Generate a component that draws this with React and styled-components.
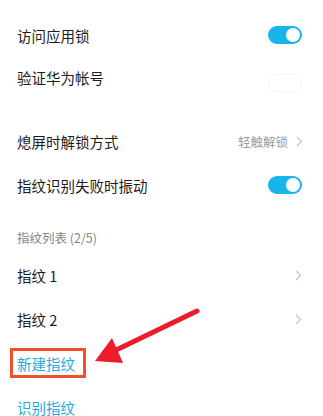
import React from "react";
import styled, { createGlobalStyle } from "styled-components";

const GlobalStyle = createGlobalStyle`
  html, body {
    margin: 0;
    padding: 0;
    background: #fff;
  }
  body {
    font-family: "Noto Sans CJK SC", "Noto Sans", sans-serif;
  }
`;

const Page = styled.div`
  position: relative;
  width: 323px;
  height: 416px;
  overflow: hidden;
  padding: 14px 21px 0 17px;
  box-sizing: border-box;
  display: flex;
  flex-direction: column;
`;

const Row = styled.div`
  height: ${(p) => p.h || 44}px;
  display: flex;
  align-items: center;
  justify-content: space-between;
  flex-shrink: 0;
`;

const Spacer = styled.div`
  height: ${(p) => p.h}px;
  flex-shrink: 0;
`;

const Label = styled.span`
  font-size: 14.5px;
  color: ${(p) => (p.link ? "#27a9e1" : "#1c1c1c")};
`;

const Header = styled.div`
  height: 45px;
  display: flex;
  align-items: flex-end;
  padding-bottom: 6px;
  box-sizing: border-box;
  font-size: 12.5px;
  color: #858585;
  flex-shrink: 0;
`;

const Right = styled.div`
  display: flex;
  align-items: center;
  gap: 8px;
  margin-right: -1px;
`;

const Value = styled.span`
  font-size: 12.5px;
  color: #9a9a9a;
`;

const Toggle = styled.div`
  width: 34px;
  height: 18px;
  border-radius: 9px;
  background: ${(p) => (p.on ? "#17b5ec" : "transparent")};
  border: ${(p) => (p.on ? "none" : "1px solid #f5f5f5")};
  box-sizing: border-box;
  position: relative;
  margin-top: ${(p) => p.shift || 0}px;
  &::after {
    content: "";
    position: absolute;
    top: ${(p) => (p.on ? 2 : 1)}px;
    left: ${(p) => (p.on ? 18 : 2)}px;
    width: 14px;
    height: 14px;
    border-radius: 50%;
    background: #fff;
  }
`;

const Highlight = styled.span`
  border: 3px solid #f2502c;
  padding: 2px 8px 0 4px;
  margin-left: -7px;
  margin-top: -3px;
  display: inline-flex;
  align-items: center;
  height: 30px;
  box-sizing: border-box;
`;

const ArrowLayer = styled.svg`
  position: absolute;
  left: 0;
  top: 0;
  pointer-events: none;
`;

const Chevron = () => (
  <svg width="7" height="11" viewBox="0 0 7 11">
    <path d="M1 1 L5.5 5.5 L1 10" fill="none" stroke="#c4c4c4" strokeWidth="1.2" />
  </svg>
);

export default function App() {
  return (
    <>
      <GlobalStyle />
      <Page>
        <Row h={42}>
          <Label>访问应用锁</Label>
          <Toggle on />
        </Row>
        <Row h={42}>
          <Label>验证华为帐号</Label>
          <Toggle shift={12} />
        </Row>
        <Spacer h={22} />
        <Row h={42}>
          <Label>熄屏时解锁方式</Label>
          <Right>
            <Value>轻触解锁</Value>
            <Chevron />
          </Right>
        </Row>
        <Row h={46}>
          <Label>指纹识别失败时振动</Label>
          <Toggle on />
        </Row>
        <Header>指纹列表 (2/5)</Header>
        <Row h={44}>
          <Label>指纹 1</Label>
          <Chevron />
        </Row>
        <Row h={45}>
          <Label>指纹 2</Label>
          <Chevron />
        </Row>
        <Row h={44}>
          <Highlight>
            <Label link>新建指纹</Label>
          </Highlight>
        </Row>
        <Row h={42}>
          <Label link>识别指纹</Label>
        </Row>
        <ArrowLayer width="323" height="416" viewBox="0 0 323 416">
          <line x1="197" y1="311" x2="112" y2="352" stroke="#ec1c2a" strokeWidth="5" strokeLinecap="round" />
          <path d="M95 361 L112 338 L123 363 Z" fill="#ec1c2a" />
        </ArrowLayer>
      </Page>
    </>
  );
}
